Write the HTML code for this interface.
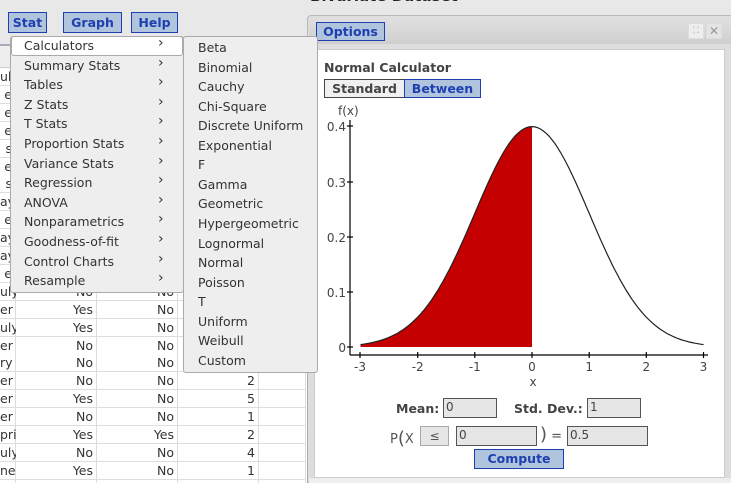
<!DOCTYPE html>
<html><head><meta charset="utf-8"><style>
*{box-sizing:border-box;margin:0;padding:0}
html,body{width:731px;height:483px;overflow:hidden}
body{background:#e8e8e8;font-family:"DejaVu Sans","Liberation Sans",sans-serif;font-size:12px;color:#333;position:relative}
.a{position:absolute}
.btn{position:absolute;background:#b0c4de;border:1px solid #1e3fb0;color:#1e3fb0;font-weight:bold;font-size:12.5px;text-align:center;line-height:19px}
.cell{position:absolute;height:18px;border-bottom:1px solid #ddd;border-right:1px solid #ddd;background:#fff;text-align:right;padding-right:3px;line-height:18px;font-size:12.5px;color:#333}
.mi{position:absolute;left:24px;font-size:12.5px;color:#333;z-index:11}
.ar{position:absolute;left:158px;font-size:14px;color:#333;z-index:11}
.si{position:absolute;left:198px;font-size:12.5px;color:#333;z-index:11}
.inp{position:absolute;background:#e6e6e6;border:1px solid #555;font-size:12px;line-height:17px;padding-left:2px;color:#444}
</style></head><body>
<div class="a" style="left:310px;top:-13px;font-weight:bold;font-size:15px;color:#222">Bivariate Dataset</div>
<!-- options panel -->
<div class="a" style="left:307px;top:15px;width:430px;height:470px;background:#ddd;border:1px solid #bbb;border-radius:4px"></div>
<div class="a" style="left:309px;top:17px;width:425px;height:27px;background:linear-gradient(#e0e0e0,#cfcfcf);border-radius:3px"></div>
<div class="btn" style="left:316px;top:22px;width:69px;height:19px;line-height:17px">Options</div>
<div class="a" style="left:688px;top:23px;width:16px;height:16px;background:#eee;border:1px solid #ddd;color:#aaa;font-size:9px;text-align:center;line-height:14px">⛶</div>
<div class="a" style="left:706px;top:23px;width:16px;height:16px;background:#e4e4e4;border:1px solid #ddd;color:#999;font-size:12px;font-weight:bold;text-align:center;line-height:14px">✕</div>
<div class="a" style="left:314px;top:49px;width:411px;height:429px;background:#fff;border:1px solid #ccc"></div>
<div class="a" style="left:324px;top:60px;font-weight:bold;font-size:12.5px;color:#444">Normal Calculator</div>
<div class="a" style="left:324px;top:79px;width:81px;height:19px;border:1px solid #444;background:#f0f0f0;font-weight:bold;font-size:12.5px;text-align:center;line-height:17px;color:#444">Standard</div>
<div class="btn" style="left:404px;top:79px;width:77px;height:19px;line-height:17px">Between</div>
<svg class="a" style="left:0;top:0" width="731" height="483">
<path id="fill" fill="#c40000"/>
<polyline id="curve" fill="none" stroke="#222" stroke-width="1.2"/>
<g stroke="#000" stroke-width="1.2"><line x1="350" y1="120" x2="350" y2="355"/><line x1="350" y1="355" x2="708" y2="355"/>
<line x1="347" y1="126" x2="353" y2="126"/><line x1="347" y1="182" x2="353" y2="182"/><line x1="347" y1="237" x2="353" y2="237"/><line x1="347" y1="292" x2="353" y2="292"/><line x1="347" y1="347" x2="353" y2="347"/>
<line x1="360" y1="352" x2="360" y2="358"/><line x1="417.7" y1="352" x2="417.7" y2="358"/><line x1="474.8" y1="352" x2="474.8" y2="358"/><line x1="532" y1="352" x2="532" y2="358"/><line x1="589.2" y1="352" x2="589.2" y2="358"/><line x1="646.3" y1="352" x2="646.3" y2="358"/><line x1="703.5" y1="352" x2="703.5" y2="358"/></g>
<g font-family="DejaVu Sans,sans-serif" font-size="12" fill="#444">
<text x="338" y="115">f(x)</text>
<g text-anchor="end"><text x="346" y="131">0.4</text><text x="346" y="187">0.3</text><text x="346" y="242">0.2</text><text x="346" y="297">0.1</text><text x="346" y="352">0</text></g>
<g text-anchor="middle"><text x="360" y="371">-3</text><text x="417.7" y="371">-2</text><text x="474.8" y="371">-1</text><text x="532" y="371">0</text><text x="589.2" y="371">1</text><text x="646.3" y="371">2</text><text x="703.5" y="371">3</text><text x="533" y="386">x</text></g>
</g></svg>
<script>
var p=[],f=[];for(var i=-60;i<=60;i++){var x=i/20,y=0.39894*Math.exp(-x*x/2);var px=(532+57.17*x).toFixed(1),py=(347-552.5*y).toFixed(1);p.push(px+","+py);if(i<=0)f.push(px+","+py);}
document.getElementById("curve").setAttribute("points",p.join(" "));
document.getElementById("fill").setAttribute("d","M"+f.join(" L")+" L532,347 L360.5,347Z");
</script>
<div class="a" style="left:396px;top:401px;font-weight:bold;font-size:12.5px;color:#444">Mean:</div>
<div class="inp" style="left:443px;top:398px;width:54px;height:20px">0</div>
<div class="a" style="left:514px;top:401px;font-weight:bold;font-size:12.5px;color:#444">Std. Dev.:</div>
<div class="inp" style="left:587px;top:398px;width:54px;height:20px">1</div>
<div class="a" style="left:390px;top:427px;font-size:13px;color:#555">P<span style="font-size:18px;position:relative;top:1px">(</span>X</div>
<div class="a" style="left:420px;top:426px;width:29px;height:20px;border:1px solid #aaa;background:#e6e6e6;text-align:center;line-height:18px;color:#555">≤</div>
<div class="inp" style="left:456px;top:426px;width:81px;height:20px">0</div>
<div class="a" style="left:540px;top:424px;font-size:13px;color:#555"><span style="font-size:18px">)</span> =</div>
<div class="inp" style="left:567px;top:426px;width:81px;height:20px">0.5</div>
<div class="btn" style="left:474px;top:449px;width:90px;height:20px;line-height:18px">Compute</div>
<div class="a" style="left:309px;top:478px;width:422px;height:5px;background:#eee"></div>

<!-- left panel -->
<div class="a" style="left:0;top:44px;width:308px;height:439px;background:#fff;border-right:1px solid #aaa"></div>
<div class="a" style="left:0;top:44px;width:308px;height:2px;background:#aab"></div>
<div class="a" style="left:0;top:46px;width:306px;height:22px;background:#eee;border-bottom:1px solid #ccc"></div>
<div id="tbl"></div>
<script>
var L=["uly","e","e","e","s","e","s","ay","e","ay","ay","e","uly"];
var R=[["er","Yes","No",""],["uly","Yes","No",""],["er","No","No",""],["ry","No","No",""],["er","No","No","2"],["er","Yes","No","5"],["er","No","No","1"],["pril","Yes","Yes","2"],["uly","No","No","4"],["ne","Yes","No","1"],["","","",""]];
var h="";var xs=[0,16,97,178,259],ws=[16,81,81,81,47];
for(var k=0;k<24;k++){var t=68+17.9*k;var row=k<13?[L[k],"No","No",""]:R[k-13]||["","","",""];
for(var c=0;c<5;c++){h+='<div class="cell" style="left:'+xs[c]+'px;top:'+t+'px;width:'+ws[c]+'px">'+(c<4?row[c]:"")+'</div>';}}
document.getElementById("tbl").innerHTML=h;
</script>
<div class="a" style="left:0;top:0;width:306px;height:44px;background:#e8e8e8"></div>
<div class="btn" style="left:8px;top:12px;width:39px;height:21px">Stat</div>
<div class="btn" style="left:63px;top:12px;width:59px;height:21px">Graph</div>
<div class="btn" style="left:131px;top:12px;width:47px;height:21px">Help</div>
<!-- menu -->
<div class="a" style="z-index:10;left:10px;top:36px;width:174px;height:257px;background:#eee;border:1px solid #aaa;border-radius:3px"></div>
<div class="a" style="z-index:10;left:11px;top:36px;width:172px;height:20px;background:#fff;border:1px solid #aaa;border-radius:3px"></div>
<div id="m"></div>
<div class="a" style="z-index:10;left:183px;top:36px;width:135px;height:337px;background:#eee;border:1px solid #aaa;border-radius:3px"></div>
<div id="s"></div>
<script>
var M=["Calculators","Summary Stats","Tables","Z Stats","T Stats","Proportion Stats","Variance Stats","Regression","ANOVA","Nonparametrics","Goodness-of-fit","Control Charts","Resample"];
var h="";for(var i=0;i<M.length;i++){var t=38+19.6*i;h+='<div class="mi" style="top:'+t+'px">'+M[i]+'</div><div class="ar" style="top:'+(t-3)+'px">›</div>';}
document.getElementById("m").innerHTML=h;
var S=["Beta","Binomial","Cauchy","Chi-Square","Discrete Uniform","Exponential","F","Gamma","Geometric","Hypergeometric","Lognormal","Normal","Poisson","T","Uniform","Weibull","Custom"];
h="";for(var i=0;i<S.length;i++){h+='<div class="si" style="top:'+(40+19.56*i)+'px">'+S[i]+'</div>';}
document.getElementById("s").innerHTML=h;
</script>
</body></html>
